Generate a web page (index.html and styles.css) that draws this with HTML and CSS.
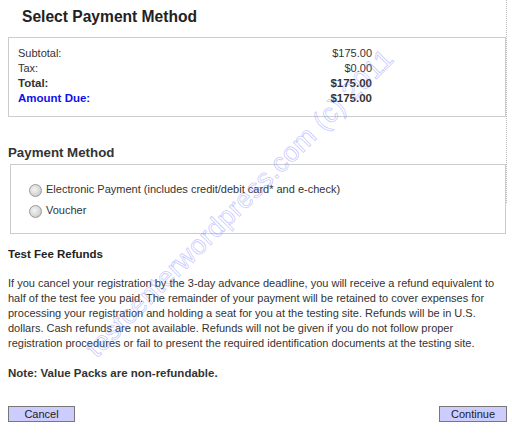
FILE: index.html
```html
<!DOCTYPE html>
<html>
<head>
<meta charset="utf-8">
<link rel="stylesheet" href="styles.css">
</head>
<body>
<div class="page">
  <h1 class="title">Select Payment Method</h1>
  <div class="summary">
    <div class="summary-grid">
      <span>Subtotal:</span><span class="amt">$175.00</span>
      <span>Tax:</span><span class="amt">$0.00</span>
      <span class="b">Total:</span><span class="amt b">$175.00</span>
      <span class="b due">Amount Due:</span><span class="amt b">$175.00</span>
    </div>
  </div>
  <h2 class="section">Payment Method</h2>
  <div class="methods">
    <label class="opt"><span class="radio"></span>Electronic Payment (includes credit/debit card* and e-check)</label>
    <label class="opt"><span class="radio"></span>Voucher</label>
  </div>
  <h3 class="sub">Test Fee Refunds</h3>
  <p class="text">If you cancel your registration by the 3-day advance deadline, you will receive a refund equivalent to half of the test fee you paid. The remainder of your payment will be retained to cover expenses for processing your registration and holding a seat for you at the testing site. Refunds will be in U.S. dollars. Cash refunds are not available. Refunds will not be given if you do not follow proper registration procedures or fail to present the required identification documents at the testing site.</p>
  <p class="note">Note: Value Packs are non-refundable.</p>
  <div class="actions">
    <button class="btn btn-cancel">Cancel</button>
    <button class="btn btn-continue">Continue</button>
  </div>
  <div class="dots"></div>
  <div class="watermark">testcenterwordpress.com (c) 2011</div>
</div>
</body>
</html>
```

FILE: styles.css
```css
html, body {
  margin: 0;
  padding: 0;
  background: #fff;
}
body {
  font-family: "Liberation Sans", Arial, sans-serif;
  color: #333;
  font-size: 11px;
}
.page {
  position: relative;
  width: 512px;
  height: 433px;
  overflow: hidden;
}
.title {
  margin: 0;
  padding: 7px 0 0 22px;
  height: 37px;
  box-sizing: border-box;
  font-size: 15.6px;
  line-height: 20px;
  font-weight: bold;
  color: #222;
}
.summary {
  margin-left: 8px;
  width: 498px;
  height: 80px;
  box-sizing: border-box;
  border: 1px solid #ccc;
  padding: 8px 0 0 9px;
}
.summary-grid {
  width: 354px;
  display: grid;
  grid-template-columns: 1fr auto;
  line-height: 15px;
}
.amt { text-align: right; }
.b { font-weight: bold; font-size: 11.5px; }
.due { color: #1010ee; }
.section {
  margin: 0;
  padding: 28px 0 0 8px;
  height: 47px;
  box-sizing: border-box;
  font-size: 13.3px;
  line-height: 16px;
  font-weight: bold;
  color: #333;
}
.methods {
  margin-left: 10px;
  width: 496px;
  height: 70px;
  box-sizing: border-box;
  border: 1px solid #ccc;
  padding: 17px 0 0 18px;
  display: flex;
  flex-direction: column;
  gap: 6px;
}
.opt {
  display: flex;
  align-items: center;
  height: 15px;
  line-height: 15px;
}
.radio {
  width: 11px;
  height: 11px;
  border-radius: 50%;
  border: 1px solid #9a9a9a;
  background: radial-gradient(circle at 40% 40%, #f4f4f4 0%, #d8d8d8 55%, #b9b9b9 100%);
  margin: 2px 4px 0 0;
  flex: none;
}
.sub {
  margin: 0;
  padding: 13px 0 0 8px;
  height: 42px;
  box-sizing: border-box;
  font-size: 11.5px;
  line-height: 15px;
  font-weight: bold;
  color: #222;
}
.text {
  margin: 0;
  width: 492px;
  padding: 0 0 0 8px;
  line-height: 15px;
}
.note {
  margin: 0;
  padding: 15px 0 0 8px;
  line-height: 15px;
  font-size: 11.5px;
  font-weight: bold;
}
.actions {
  margin-top: 25px;
  padding: 0 5px 0 8px;
  display: flex;
  justify-content: space-between;
}
.btn {
  height: 16px;
  padding: 0;
  border: 1px solid #777;
  background: #ccccff;
  font-family: "Liberation Sans", Arial, sans-serif;
  font-size: 11px;
  line-height: 14px;
  color: #222;
}
.btn-cancel { width: 67px; }
.btn-continue { width: 68px; }
.dots {
  position: absolute;
  left: 506px;
  top: 0;
  width: 0;
  height: 203px;
  border-left: 1px dotted #bbb;
}
.watermark {
  position: absolute;
  left: 10px;
  top: 188px;
  width: 460px;
  text-align: center;
  font-size: 27px;
  letter-spacing: 0.5px;
  color: rgba(255, 255, 255, 0);
  -webkit-text-stroke: 0.8px rgba(110, 120, 255, 0.4);
  transform: rotate(-45deg);
  white-space: nowrap;
}
```
